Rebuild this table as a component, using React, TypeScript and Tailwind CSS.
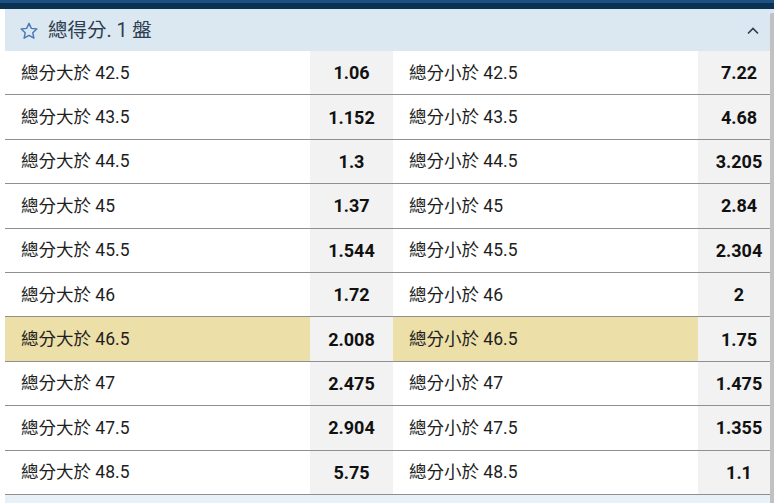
import React from "react";

const rows: [string, string, string, string][] = [
  ["42.5", "1.06", "42.5", "7.22"],
  ["43.5", "1.152", "43.5", "4.68"],
  ["44.5", "1.3", "44.5", "3.205"],
  ["45", "1.37", "45", "2.84"],
  ["45.5", "1.544", "45.5", "2.304"],
  ["46", "1.72", "46", "2"],
  ["46.5", "2.008", "46.5", "1.75"],
  ["47", "2.475", "47", "1.475"],
  ["47.5", "2.904", "47.5", "1.355"],
  ["48.5", "5.75", "48.5", "1.1"],
];

export default function App() {
  return (
    <div
      className="relative w-[774px] h-[503px] overflow-hidden bg-white"
      style={{ fontFamily: 'Roboto, "Noto Sans CJK TC", sans-serif' }}
    >
      <div className="h-[3px] bg-[#1d5183]" />
      <div className="h-[6px] bg-[#0b3152]" />
      <div className="pl-[5px] w-[780px]">
        <div className="h-[42px] bg-[#dbe7f1] flex items-center pl-[14px] pr-[20px]">
          <svg width="20" height="20" viewBox="0 0 24 24" fill="none" stroke="#4b7ab4" strokeWidth="1.7" strokeLinejoin="round" className="mt-[1px]">
            <path d="M12 2.8l2.8 6.1 6.6.7-4.9 4.5 1.4 6.5L12 17.3l-5.9 3.3 1.4-6.5-4.9-4.5 6.6-.7z" />
          </svg>
          <span className="ml-[9px] mt-[2px] text-[19.5px] text-[#2d3e50] leading-none">總得分. 1 盤</span>
          <div className="flex-1" />
          <svg width="14" height="10" viewBox="0 0 14 10" fill="none" stroke="#2d3e50" strokeWidth="1.6" className="mr-[0px] mt-[1px]">
            <path d="M2 7.5L7 2.5l5 5" />
          </svg>
        </div>
        {rows.map((r, i) => {
          const hl = i === 6;
          const lbg = hl ? "bg-[#ecdfa8]" : "bg-white";
          return (
            <div key={i} className="flex h-[44.4px] border-b border-[#8f8f8f] text-[17.5px] text-[#1e1e1e]">
              <div className={`w-[305px] flex items-center pl-[16px] ${lbg}`}>總分大於 {r[0]}</div>
              <div className="w-[83px] flex items-center justify-center bg-[#f2f2f2] font-bold text-[18px] text-[#111]">{r[1]}</div>
              <div className={`w-[305px] flex items-center pl-[16px] ${lbg}`}>總分小於 {r[2]}</div>
              <div className="w-[82px] flex items-center justify-center bg-[#f2f2f2] font-bold text-[18px] text-[#111]">{r[3]}</div>
            </div>
          );
        })}
        <div className="h-[10px] bg-[#e8f1f8]" />
      </div>
      <div className="absolute right-0 top-[13px] bottom-0 w-[4px] bg-[#c1c1c1] rounded-tl-[2px]" />
    </div>
  );
}
